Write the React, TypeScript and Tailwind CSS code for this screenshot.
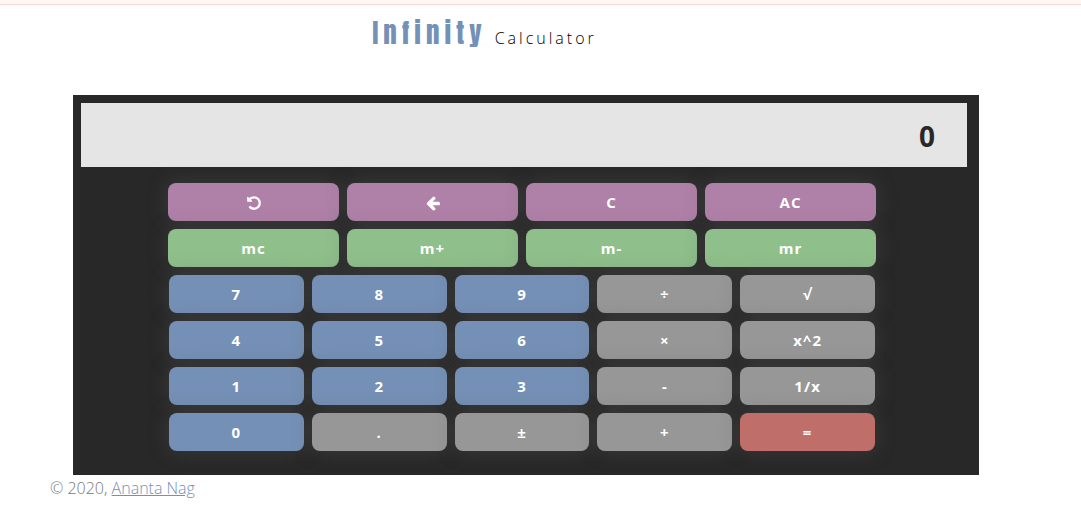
import { useState, type ReactNode } from "react";

type Key = { label: string; icon?: ReactNode; tone: string };

const PURPLE = "bg-[#b081a8]";
const GREEN = "bg-[#8fbf8b]";
const BLUE = "bg-[#7590b6]";
const GREY = "bg-[#979797]";
const RED = "bg-[#c06e69]";

function UndoIcon() {
  return (
    <svg viewBox="0 0 1536 1792" className="h-4 w-3.5" fill="currentColor" aria-hidden="true">
      <path d="M1536 896q0 156-61 298t-164 245-245 164-298 61q-172 0-327-72.5t-264-204.5q-7-10-6.5-22.5t8.5-20.5l137-138q10-9 25-9 16 2 23 12 73 95 179 147t225 52q104 0 198.5-40.5t163.5-109.5 109.5-163.5 40.5-198.5-40.5-198.5-109.5-163.5-163.5-109.5-198.5-40.5q-98 0-188 35.5t-160 101.5l137 138q31 30 14 69-17 40-59 40h-448q-26 0-45-19t-19-45v-448q0-42 40-59 39-17 69 14l130 129q107-101 244.5-156.5t284.5-55.5q156 0 298 61t245 164 164 245 61 298z" />
    </svg>
  );
}

function ArrowLeftIcon() {
  return (
    <svg viewBox="0 0 1536 1792" className="h-4 w-3.5" fill="currentColor" aria-hidden="true">
      <path d="M1536 896v128q0 53-32.5 90.5t-84.5 37.5h-704l293 294q38 36 38 90t-38 90l-75 76q-37 37-90 37-52 0-91-37l-651-652q-37-37-37-90 0-52 37-91l651-650q38-38 91-38 52 0 90 38l75 74q38 38 38 91t-38 91l-293 293h704q52 0 84.5 37.5t32.5 90.5z" />
    </svg>
  );
}

const topKeys: Key[] = [
  { label: "Undo", icon: <UndoIcon />, tone: PURPLE },
  { label: "Backspace", icon: <ArrowLeftIcon />, tone: PURPLE },
  { label: "C", tone: PURPLE },
  { label: "AC", tone: PURPLE },
  { label: "mc", tone: GREEN },
  { label: "m+", tone: GREEN },
  { label: "m-", tone: GREEN },
  { label: "mr", tone: GREEN },
];

const mainKeys: Key[] = [
  { label: "7", tone: BLUE },
  { label: "8", tone: BLUE },
  { label: "9", tone: BLUE },
  { label: "÷", tone: GREY },
  { label: "√", tone: GREY },
  { label: "4", tone: BLUE },
  { label: "5", tone: BLUE },
  { label: "6", tone: BLUE },
  { label: "×", tone: GREY },
  { label: "x^2", tone: GREY },
  { label: "1", tone: BLUE },
  { label: "2", tone: BLUE },
  { label: "3", tone: BLUE },
  { label: "-", tone: GREY },
  { label: "1/x", tone: GREY },
  { label: "0", tone: BLUE },
  { label: ".", tone: GREY },
  { label: "±", tone: GREY },
  { label: "+", tone: GREY },
  { label: "=", tone: RED },
];

function CalcKey({ item, onPress }: { item: Key; onPress: (label: string) => void }) {
  return (
    <button
      type="button"
      aria-label={item.icon ? item.label : undefined}
      onClick={() => onPress(item.label)}
      className={`flex h-[38px] items-center justify-center rounded-lg pt-px text-[15px] font-bold tracking-[1px] text-white shadow-[0_0_20px_rgba(90,90,90,0.4)] ${item.tone}`}
    >
      {item.icon ?? item.label}
    </button>
  );
}

export default function App() {
  const [value, setValue] = useState("0");

  const press = (label: string) => {
    if (/^[0-9]$/.test(label)) setValue((v) => (v === "0" ? label : v + label));
    else if (label === "." && !value.includes(".")) setValue(value + ".");
    else if (label === "Backspace") setValue((v) => v.slice(0, -1) || "0");
    else if (label === "C" || label === "AC") setValue("0");
  };

  return (
    <div className="bg-white font-['Open_Sans','Noto_Sans',sans-serif]">
      <div className="h-[5px] border-b border-[#f6d9d4] bg-[#fff7f5]" />
      <header className="flex h-[90px] items-baseline justify-center pt-2 pr-[112px]">
        <h1 className="flex items-baseline gap-2">
          <span className="font-[Impact,Anton,'Open_Sans',sans-serif] text-[27px] leading-10 font-normal tracking-[5px] text-[#7590b6]">
            Infinity
          </span>
          <span className="text-base font-light tracking-[3px] text-black">Calculator</span>
        </h1>
      </header>
      <main className="mr-[102px] ml-[73px] bg-[#282828] pt-2 pr-3 pb-6 pl-2">
        <output className="flex h-16 items-center justify-end bg-[#e5e5e5] pt-0.5 pr-8 text-[28px] font-bold text-[#282828]">
          {value}
        </output>
        <div className="pt-4 pr-1">
          <div className="mx-auto max-w-[708px]">
            <div className="grid grid-cols-4 gap-2">
              {topKeys.map((k) => (
                <CalcKey key={k.label} item={k} onPress={press} />
              ))}
            </div>
            <div className="mt-2 grid grid-cols-5 gap-2 px-px">
              {mainKeys.map((k) => (
                <CalcKey key={k.label} item={k} onPress={press} />
              ))}
            </div>
          </div>
        </div>
      </main>
      <footer className="pt-px pl-[50px] text-base font-light text-[#777777]">
        © 2020,{" "}
        <a href="#author" className="text-[#7590b6] underline">
          Ananta Nag
        </a>
      </footer>
    </div>
  );
}
